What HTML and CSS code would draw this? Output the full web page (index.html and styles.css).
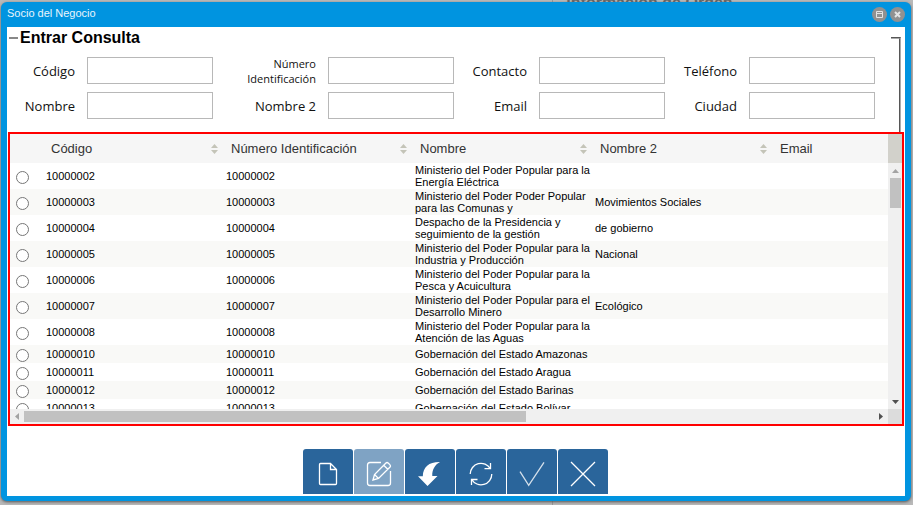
FILE: index.html
```html
<!DOCTYPE html>
<html lang="es">
<head>
  <meta charset="UTF-8">
  <meta name="viewport" content="width=device-width, initial-scale=1.0">
  <title>Socio del Negocio</title>
  <link rel="stylesheet" href="styles.css">
</head>
<body>
  <div class="page">
    <div class="page-left"></div>
    <div class="page-right"><h2>Información de Orden</h2></div>
  </div>

  <div class="window" role="dialog" aria-labelledby="window-title">
    <header class="titlebar">
      <span id="window-title">Socio del Negocio</span>
      <button type="button" class="win-btn" aria-label="Maximizar">
        <svg width="7" height="7" viewBox="0 0 7 7"><path d="M.5 .5h6v6h-6zM.5 2.5h6"/></svg>
      </button>
      <button type="button" class="win-btn" aria-label="Cerrar">
        <svg class="thick" width="7" height="7" viewBox="0 0 7 7"><path d="M1 1l5 5M6 1l-5 5"/></svg>
      </button>
    </header>

    <main class="content">
      <section class="query">
        <div class="query-main">
          <h1>Entrar Consulta</h1>
          <form class="fields">
            <label for="codigo">Código</label>
            <input type="text" id="codigo">
            <label for="numero" class="small">Número Identificación</label>
            <input type="text" id="numero">
            <label for="contacto">Contacto</label>
            <input type="text" id="contacto">
            <label for="telefono">Teléfono</label>
            <input type="text" id="telefono">
            <label for="nombre">Nombre</label>
            <input type="text" id="nombre">
            <label for="nombre2">Nombre 2</label>
            <input type="text" id="nombre2">
            <label for="email">Email</label>
            <input type="text" id="email">
            <label for="ciudad">Ciudad</label>
            <input type="text" id="ciudad">
          </form>
        </div>
        <div class="query-edge"></div>
      </section>

      <section class="results">
        <div class="viewport">
          <table>
            <colgroup>
              <col class="col-radio">
              <col class="col-data">
              <col class="col-number">
              <col class="col-data">
              <col class="col-data">
              <col class="col-data">
            </colgroup>
            <thead>
              <tr>
                <th></th>
                <th><div class="head">Código <svg width="7" height="10" viewBox="0 0 7 10"><path d="M0 4l3.500-4L7 4zM0 6h7l-3.500 4z"/></svg></div></th>
                <th><div class="head">Número Identificación <svg width="7" height="10" viewBox="0 0 7 10"><path d="M0 4l3.500-4L7 4zM0 6h7l-3.500 4z"/></svg></div></th>
                <th><div class="head">Nombre <svg width="7" height="10" viewBox="0 0 7 10"><path d="M0 4l3.500-4L7 4zM0 6h7l-3.500 4z"/></svg></div></th>
                <th><div class="head">Nombre 2 <svg width="7" height="10" viewBox="0 0 7 10"><path d="M0 4l3.500-4L7 4zM0 6h7l-3.500 4z"/></svg></div></th>
                <th><div class="head">Email</div></th>
              </tr>
            </thead>
            <tbody>
              <tr><td><input type="radio" name="socio" aria-label="10000002"></td><td>10000002</td><td>10000002</td><td>Ministerio del Poder Popular para la Energía Eléctrica</td><td></td><td></td></tr>
              <tr><td><input type="radio" name="socio" aria-label="10000003"></td><td>10000003</td><td>10000003</td><td>Ministerio del Poder Poder Popular para las Comunas y</td><td>Movimientos Sociales</td><td></td></tr>
              <tr><td><input type="radio" name="socio" aria-label="10000004"></td><td>10000004</td><td>10000004</td><td>Despacho de la Presidencia y seguimiento de la gestión</td><td>de gobierno</td><td></td></tr>
              <tr><td><input type="radio" name="socio" aria-label="10000005"></td><td>10000005</td><td>10000005</td><td>Ministerio del Poder Popular para la Industria y Producción</td><td>Nacional</td><td></td></tr>
              <tr><td><input type="radio" name="socio" aria-label="10000006"></td><td>10000006</td><td>10000006</td><td>Ministerio del Poder Popular para la Pesca y Acuicultura</td><td></td><td></td></tr>
              <tr><td><input type="radio" name="socio" aria-label="10000007"></td><td>10000007</td><td>10000007</td><td>Ministerio del Poder Popular para el Desarrollo Minero</td><td>Ecológico</td><td></td></tr>
              <tr><td><input type="radio" name="socio" aria-label="10000008"></td><td>10000008</td><td>10000008</td><td>Ministerio del Poder Popular para la Atención de las Aguas</td><td></td><td></td></tr>
              <tr><td><input type="radio" name="socio" aria-label="10000010"></td><td>10000010</td><td>10000010</td><td>Gobernación del Estado Amazonas</td><td></td><td></td></tr>
              <tr><td><input type="radio" name="socio" aria-label="10000011"></td><td>10000011</td><td>10000011</td><td>Gobernación del Estado Aragua</td><td></td><td></td></tr>
              <tr><td><input type="radio" name="socio" aria-label="10000012"></td><td>10000012</td><td>10000012</td><td>Gobernación del Estado Barinas</td><td></td><td></td></tr>
              <tr><td><input type="radio" name="socio" aria-label="10000013"></td><td>10000013</td><td>10000013</td><td>Gobernación del Estado Bolívar</td><td></td><td></td></tr>
            </tbody>
          </table>
        </div>
        <div class="side">
          <div class="side-head"></div>
          <div class="scroll-v">
            <button type="button" class="arrow off" aria-label="Subir"><svg width="7" height="4" viewBox="0 0 7 4"><path d="M0 4l3.500-4L7 4z"/></svg></button>
            <div class="thumb-v"></div>
            <button type="button" class="arrow" aria-label="Bajar"><svg width="7" height="4" viewBox="0 0 7 4"><path d="M0 0h7L3.500 4z"/></svg></button>
          </div>
        </div>
        <div class="scroll-h">
          <button type="button" class="arrow off" aria-label="Izquierda"><svg width="4" height="7" viewBox="0 0 4 7"><path d="M4 0v7L0 3.500z"/></svg></button>
          <div class="track-h"><div class="thumb-h"></div></div>
          <button type="button" class="arrow" aria-label="Derecha"><svg width="4" height="7" viewBox="0 0 4 7"><path d="M0 0v7l4-3.500z"/></svg></button>
        </div>
        <div class="scroll-corner"></div>
      </section>

      <nav class="toolbar">
        <button type="button" aria-label="Nuevo">
          <svg width="26" height="26" viewBox="0 0 26 26"><path d="M5.500 2.500h10l6 6v14q0 1-1 1h-15q-1 0-1-1v-19q0-1 1-1zM15.500 2.500v6h6"/></svg>
        </button>
        <button type="button" class="active" aria-label="Editar">
          <svg width="26" height="26" viewBox="0 0 26 26"><path d="M15 1.500H4Q1.500 1.500 1.500 4v18q0 2.500 2.500 2.500h18q2.500 0 2.500-2.500V10"/><path d="M7 19l1.500-5.500L19.700 2.200q1.300-1.300 2.700 0l1.400 1.400q1.300 1.400 0 2.700L12.500 17.500zM17.700 4.200l4.100 4.100M8.500 13.500l4 4"/></svg>
        </button>
        <button type="button" aria-label="Deshacer">
          <svg width="26" height="26" viewBox="0 0 26 26"><path class="solid" d="M23 1C17.500 4 15 9 15.300 15h5.200L10.500 25 1 15.300h4.800C6 6 12 .8 23 1z"/></svg>
        </button>
        <button type="button" aria-label="Refrescar">
          <svg width="26" height="26" viewBox="0 0 26 26"><path d="M2.200 13A10.800 10.800 0 0 1 22.300 7.700M22.500 2v5.700h-6M23.800 13A10.800 10.800 0 0 1 3.700 18.500M3.500 24v-5.500h6"/></svg>
        </button>
        <button type="button" aria-label="Aceptar">
          <svg class="soft" width="26" height="26" viewBox="0 0 26 26"><path d="M1 10.700l8.700 13.600L25 1.300"/></svg>
        </button>
        <button type="button" aria-label="Cancelar">
          <svg width="26" height="26" viewBox="0 0 26 26"><path d="M1 1l24 24M25 1L1 25"/></svg>
        </button>
      </nav>
    </main>
  </div>
</body>
</html>
```

FILE: styles.css
```css
* { box-sizing: border-box; }
body {
  margin: 0;
  height: 100vh;
  overflow: hidden;
  background: #b9b9b9;
  font-family: "Liberation Sans", Arial, sans-serif;
}
button {
  padding: 0;
  border: none;
  cursor: pointer;
}
svg { display: block; }

/* page behind the window */
.page {
  display: grid;
  grid-template-columns: 20fr 13fr;
  height: 100%;
}
.page-left {
  border-right: 1px solid #999;
}
.page-right {
  padding-left: 13px;
}
.page-right h2 {
  margin: -6px 0 0;
  font-size: 16px;
  line-height: 18px;
  color: #666;
}

.window {
  position: absolute;
  top: 2px;
  right: 2px;
  bottom: 4px;
  left: 1px;
  display: flex;
  flex-direction: column;
  padding: 0 6px 5px;
  background: #0094e0;
  border-radius: 6px;
  box-shadow: 0 1px 3px #555;
}
.titlebar {
  display: flex;
  align-items: center;
  gap: 3px;
  height: 25px;
  flex-shrink: 0;
  color: #e8f5fc;
  font-size: 11px;
}
.titlebar span {
  flex: 1;
  line-height: 22px;
  padding-bottom: 3px;
}
.win-btn {
  display: flex;
  align-items: center;
  justify-content: center;
  width: 15px;
  height: 15px;
  border-radius: 50%;
  background: #919191;
}
.win-btn svg {
  fill: none;
  stroke: #e4e4e4;
}
.win-btn .thick { stroke-width: 2; }

.content {
  flex: 1;
  min-height: 0;
  display: flex;
  flex-direction: column;
  padding: 0 1px 2px;
  background: #fff;
}

.query {
  display: flex;
  justify-content: space-between;
  padding: 0 3px 0 1px;
}
.query-main {
  flex: 1;
  padding-bottom: 13px;
}
.query h1 {
  display: flex;
  align-items: center;
  gap: 2px;
  margin: 0;
  font-size: 16px;
  line-height: 22px;
}
.query h1::before {
  content: "";
  width: 9px;
  height: 2px;
  background: #888;
}
.query-edge {
  width: 10px;
  margin-top: 10px;
  border-top: 2px groove #aaa;
  border-right: 2px groove #aaa;
}
.fields {
  display: grid;
  grid-template-columns: 66px 1fr 91px 1fr 61px 1fr 60px 1fr;
  gap: 8px 12px;
  align-items: center;
  margin-top: 8px;
  padding-right: 16px;
}
.fields label {
  font-family: "Open Sans", "Noto Sans", sans-serif;
  font-size: 13px;
  line-height: 18px;
  text-align: right;
  color: #111;
}
.fields .small {
  font-size: 11px;
  line-height: 15px;
  margin: -2px 0;
}
.fields input {
  width: 100%;
  height: 27px;
  border: 1px solid #b8b8b8;
  background: #fff;
}

.results {
  flex: 1;
  min-height: 0;
  display: grid;
  grid-template-columns: 1fr 14px;
  grid-template-rows: 1fr 15px;
  border: 2px solid #f00;
}
.viewport {
  min-width: 0;
  min-height: 0;
  overflow: hidden;
}
table {
  width: 940px;
  table-layout: fixed;
  border-collapse: collapse;
  font-size: 11px;
  line-height: 12px;
  color: #000;
}
.col-radio { width: 31px; }
.col-data { width: 180px; }
.col-number { width: 189px; }
th {
  padding: 0 3px 0 10px;
  height: 29px;
  background: #f6f6f6;
  color: #333;
  font-size: 13px;
  font-weight: normal;
  text-align: left;
}
.head {
  display: flex;
  align-items: center;
  justify-content: space-between;
}
.head svg { fill: #c4c4b8; }
td {
  height: 18px;
  padding: 1px 0 1px 5px;
  vertical-align: middle;
}
tbody tr:nth-child(even) { background: #f9f9f7; }
td input {
  display: block;
  width: 13px;
  height: 13px;
  margin: 3px 0 0 1px;
}

.side {
  display: flex;
  flex-direction: column;
  min-height: 0;
}
.side-head {
  height: 29px;
  background: #d2d1cb;
}
.scroll-v {
  flex: 1;
  display: flex;
  flex-direction: column;
  align-items: center;
  background: #f0f0f0;
}
.scroll-v .arrow:last-child { margin-top: auto; }
.thumb-v {
  width: 11px;
  height: 30px;
  background: #c1c1c1;
}
.arrow {
  display: flex;
  align-items: center;
  justify-content: center;
  width: 14px;
  height: 15px;
  background: #f0f0f0;
}
.arrow svg { fill: #505050; }
.arrow.off svg { fill: #a3a3a3; }
.scroll-h {
  display: flex;
  background: #f0f0f0;
}
.track-h {
  flex: 1;
  padding: 2px 0;
}
.thumb-h {
  width: 59%;
  height: 11px;
  background: #c1c1c1;
}
.scroll-corner { background: #dcdcdc; }

.toolbar {
  display: flex;
  justify-content: center;
  gap: 1px;
  margin-top: 23px;
  padding-right: 2px;
}
.toolbar button {
  display: flex;
  justify-content: center;
  width: 50px;
  height: 45px;
  padding-top: 12px;
  border-radius: 3px 3px 0 0;
  background: #2a659b;
}
.toolbar .active { background: #7fa3c4; }
.toolbar svg {
  fill: none;
  stroke: #fff;
  stroke-width: 1.3;
}
.toolbar .soft { stroke: #d4e0eb; }
.toolbar .solid {
  fill: #fff;
  stroke: none;
}
```
